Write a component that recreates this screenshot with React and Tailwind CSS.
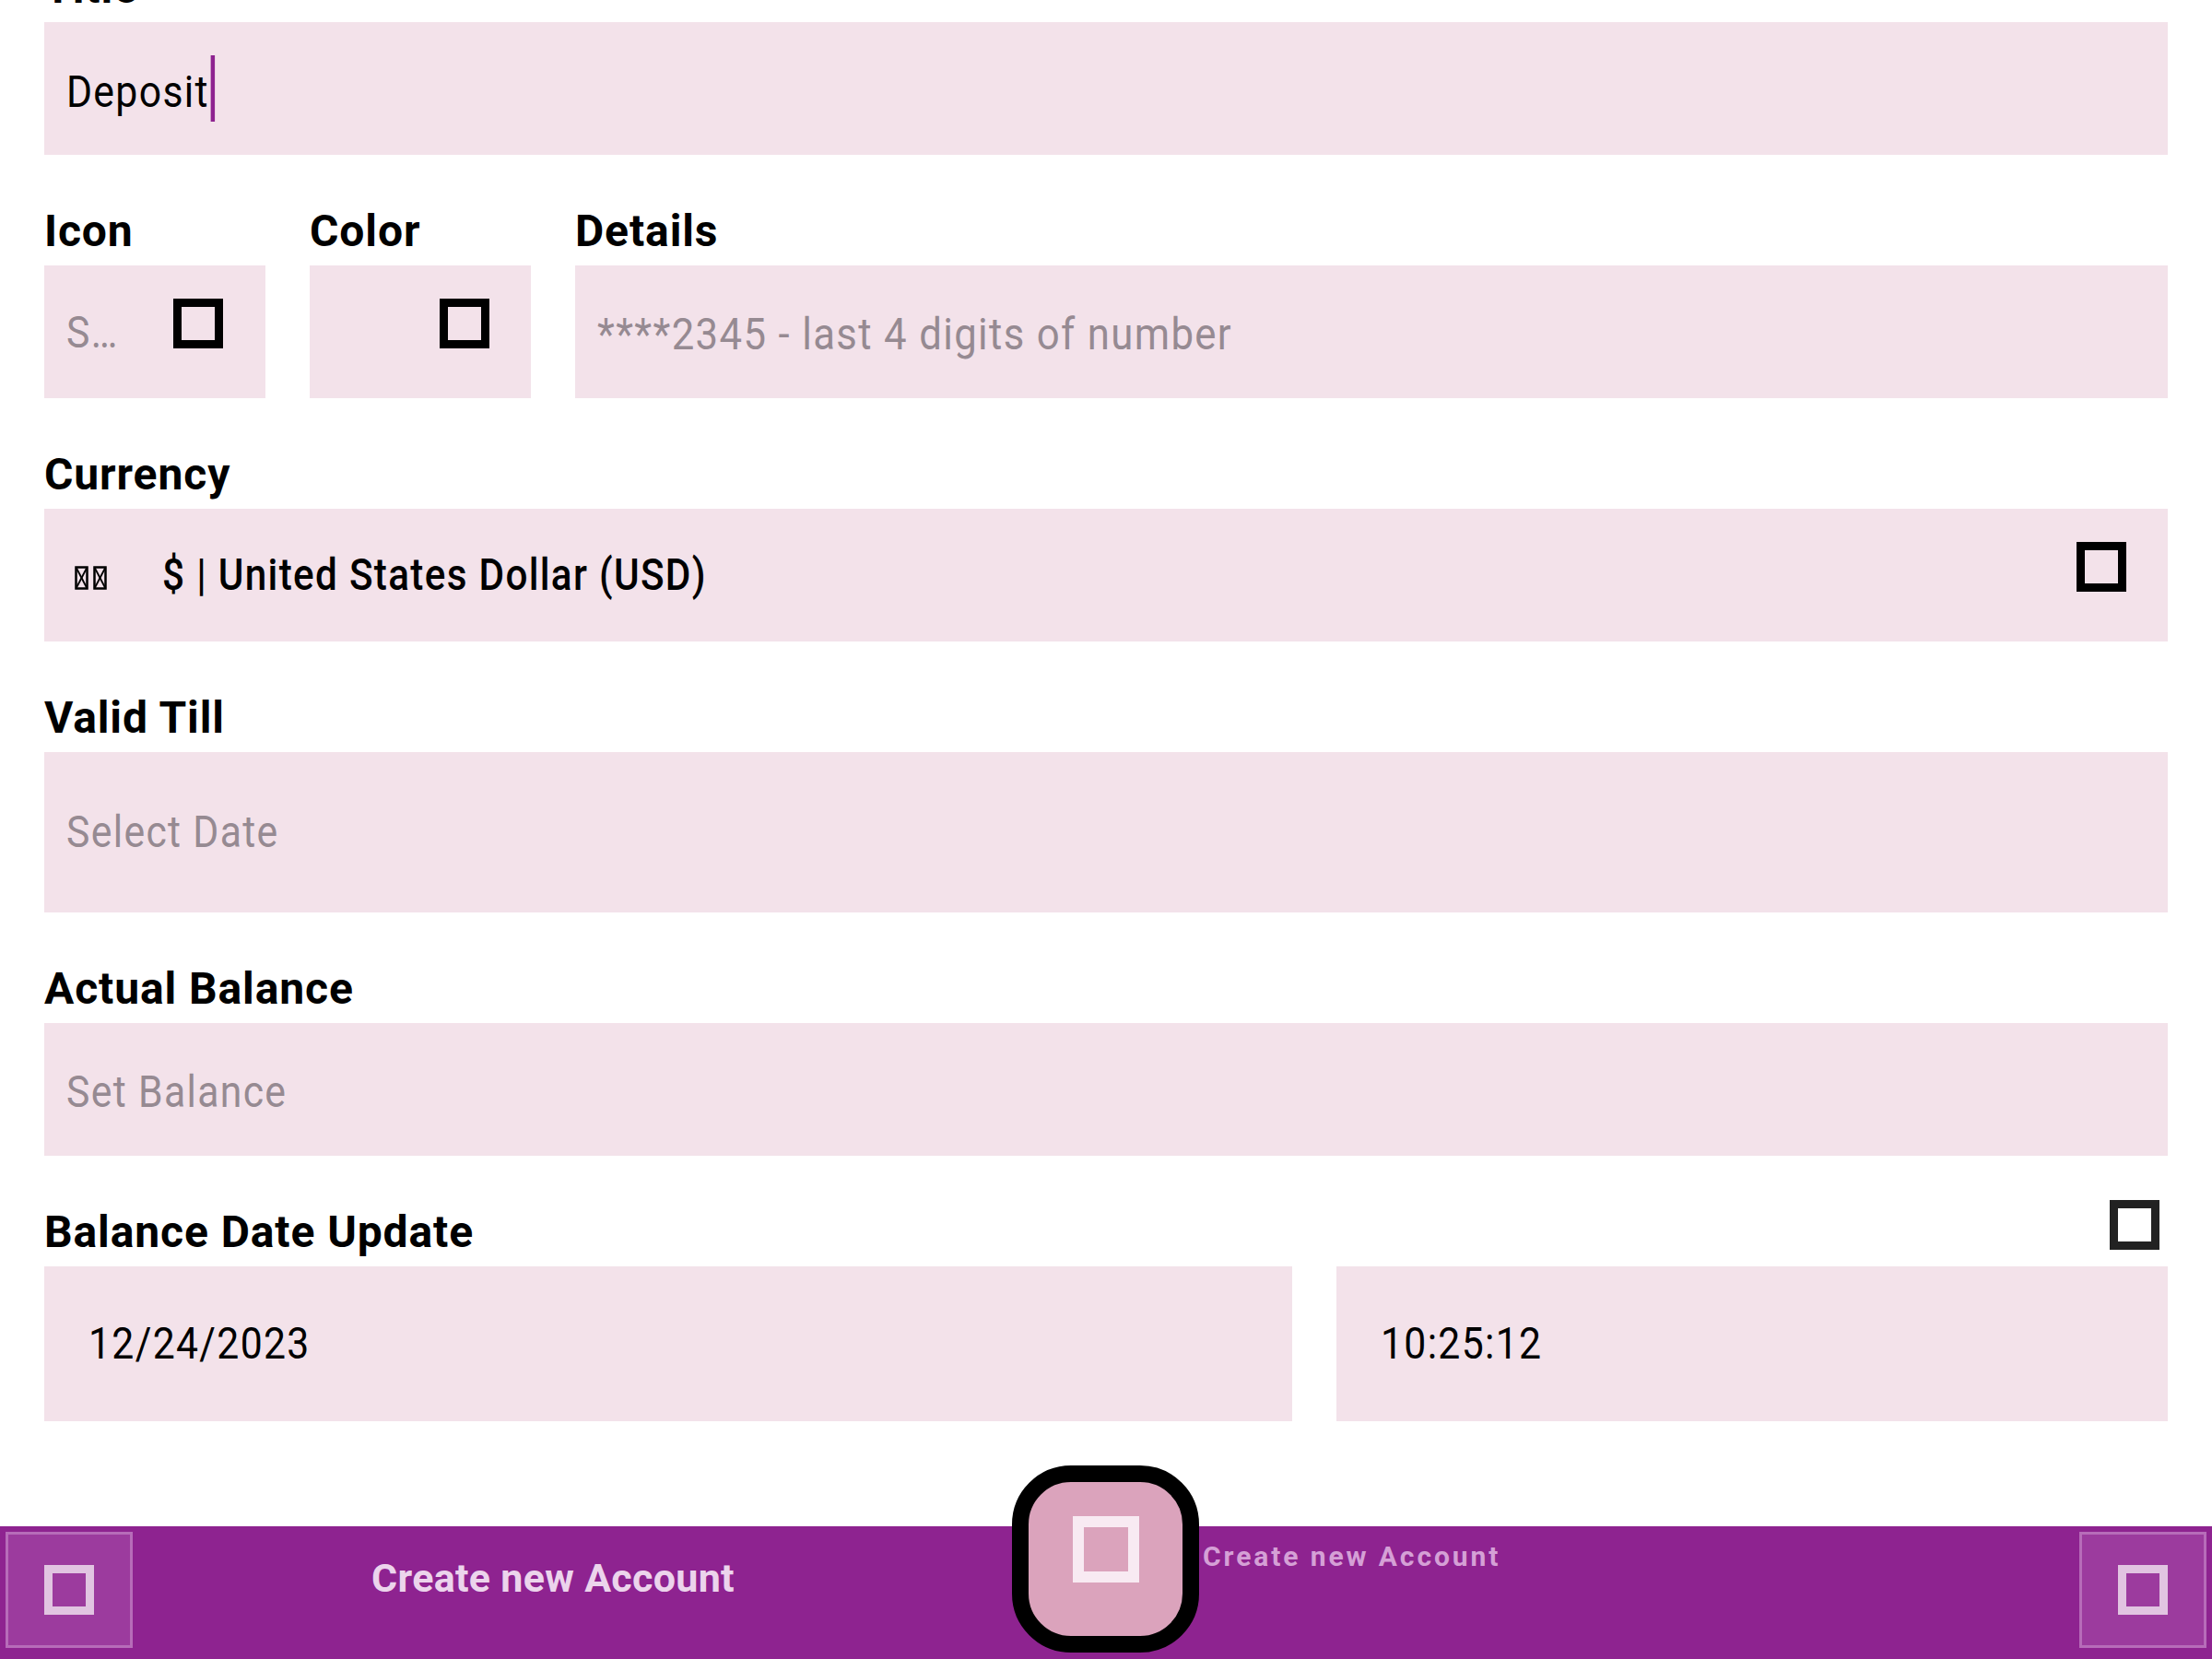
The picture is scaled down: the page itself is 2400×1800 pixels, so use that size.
import React from "react";

const FONT = { fontFamily: "Roboto, 'Noto Sans', sans-serif" };

function Label({ children }) {
  return (
    <div className="text-[48px] leading-[48px] font-bold tracking-[0.9px] text-black mb-[13px] whitespace-nowrap">
      {children}
    </div>
  );
}

function Tofu({ color = "border-black", size = "w-[54px] h-[54px] border-[9px]" }) {
  return <div className={`${size} ${color} box-border shrink-0`} />;
}

function FlagTofu() {
  return (
    <svg width="15" height="26" viewBox="0 0 15 26" className="shrink-0">
      <rect x="1.5" y="1.5" width="12" height="23" fill="none" stroke="#000" strokeWidth="2.5" />
      <line x1="1.5" y1="1.5" x2="13.5" y2="24.5" stroke="#000" strokeWidth="1.8" />
      <line x1="13.5" y1="1.5" x2="1.5" y2="24.5" stroke="#000" strokeWidth="1.8" />
    </svg>
  );
}

function FieldText({ children, className = "", scale = "scale-x-[0.89]" }) {
  return (
    <span className={`inline-block origin-left ${scale} text-[48px] leading-[48px] tracking-[1.5px] whitespace-nowrap ${className}`}>
      {children}
    </span>
  );
}

export default function App() {
  return (
    <div style={FONT} className="w-[2400px] h-[1800px] bg-white flex flex-col overflow-hidden relative">
      <main className="flex-1 overflow-hidden px-[48px]">
        <div className="-mt-[37px] flex flex-col">
          {/* Title */}
          <section>
            <Label>Title</Label>
            <div className="h-[144px] bg-[#f3e2ea] flex items-center pl-[24px]">
              <span className="inline-flex items-center origin-left scale-x-[0.89]">
                <span className="inline-block pt-[8px] text-[48px] leading-[48px] tracking-[1.5px] text-black">Deposit</span>
                <span className="inline-block w-[5px] h-[72px] bg-[#8e2390] ml-[2px]" />
              </span>
            </div>
          </section>

          {/* Icon / Color / Details */}
          <section className="mt-[59px] grid grid-cols-[240px_240px_1fr] gap-x-[48px]">
            <div>
              <Label>Icon</Label>
              <div className="h-[144px] bg-[#f3e2ea] flex items-center pl-[24px] pr-[46px] justify-between">
                <FieldText className="text-[#968a92] pt-[2px]">S…</FieldText>
                <div className="-mt-[18px]"><Tofu /></div>
              </div>
            </div>
            <div>
              <Label>Color</Label>
              <div className="h-[144px] bg-[#f3e2ea] flex items-center justify-end pr-[45px]">
                <div className="-mt-[18px]"><Tofu /></div>
              </div>
            </div>
            <div>
              <Label>Details</Label>
              <div className="h-[144px] bg-[#f3e2ea] flex items-center pl-[24px]">
                <FieldText className="text-[#968a92] pt-[6px]" scale="scale-x-[0.91]">****2345 - last 4 digits of number</FieldText>
              </div>
            </div>
          </section>

          {/* Currency */}
          <section className="mt-[59px]">
            <Label>Currency</Label>
            <div className="h-[144px] bg-[#f3e2ea] flex items-center pl-[33px] pr-[45px]">
              <div className="flex items-center gap-[5px] pt-[6px]">
                <FlagTofu />
                <FlagTofu />
              </div>
              <span className="ml-[60px] inline-block origin-left scale-x-[0.88] text-[48px] leading-[48px] font-medium tracking-[1.5px] text-black whitespace-nowrap">$ | United States Dollar (USD)</span>
              <div className="flex-1" />
              <div className="-mt-[18px]"><Tofu /></div>
            </div>
          </section>

          {/* Valid Till */}
          <section className="mt-[59px]">
            <Label>Valid Till</Label>
            <div className="h-[174px] bg-[#f3e2ea] flex items-center pl-[24px]">
              <FieldText className="text-[#968a92]">Select Date</FieldText>
            </div>
          </section>

          {/* Actual Balance */}
          <section className="mt-[59px]">
            <Label>Actual Balance</Label>
            <div className="h-[144px] bg-[#f3e2ea] flex items-center pl-[24px]">
              <FieldText className="text-[#968a92] pt-[6px]">Set Balance</FieldText>
            </div>
          </section>

          {/* Balance Date Update */}
          <section className="mt-[59px]">
            <div className="flex items-start justify-between">
              <Label>Balance Date Update</Label>
              <div className="-mt-[11px] mr-[9px]"><Tofu color="border-[#222222]" /></div>
            </div>
            <div className="grid grid-cols-[3fr_2fr] gap-x-[48px]">
              <div className="h-[168px] bg-[#f3e2ea] flex items-center pl-[48px]">
                <FieldText className="text-black">12/24/2023</FieldText>
              </div>
              <div className="h-[168px] bg-[#f3e2ea] flex items-center pl-[48px]">
                <FieldText className="text-black">10:25:12</FieldText>
              </div>
            </div>
          </section>
        </div>
      </main>

      {/* Bottom bar */}
      <footer className="h-[144px] bg-[#8e2390] grid grid-cols-2 shrink-0">
        <div className="grid grid-cols-[150px_1fr_150px] items-start pt-[6px]">
          <button className="ml-[6px] w-[138px] h-[126px] bg-[#9c3b9e] border-[3px] border-[#b76cb9] flex items-center justify-center">
            <Tofu color="border-[#e1c4e1]" />
          </button>
          <div className="flex justify-center pt-[26px]">
            <span className="text-[43px] leading-[48px] font-bold tracking-[0.3px] text-[#ecd4ec] whitespace-nowrap">Create new Account</span>
          </div>
          <div />
        </div>
        <div className="flex items-start pt-[6px]">
          <span className="ml-[105px] mt-[12px] text-[30px] leading-[30px] font-bold tracking-[2.9px] text-[#d5a0d6] whitespace-nowrap">Create new Account</span>
          <div className="flex-1" />
          <button className="mr-[6px] w-[138px] h-[126px] bg-[#9c3b9e] border-[3px] border-[#b76cb9] flex items-center justify-center">
            <Tofu color="border-[#e1c4e1]" />
          </button>
        </div>
      </footer>

      {/* FAB */}
      <button className="absolute left-[1098px] top-[1590px] w-[203px] h-[203px] rounded-[64px] border-[18px] border-black bg-[#dba3bc] flex items-center justify-center">
        <div className="-mt-[22px] w-[72px] h-[72px] border-[12px] border-[#f8eaf2] box-border" />
      </button>
    </div>
  );
}
